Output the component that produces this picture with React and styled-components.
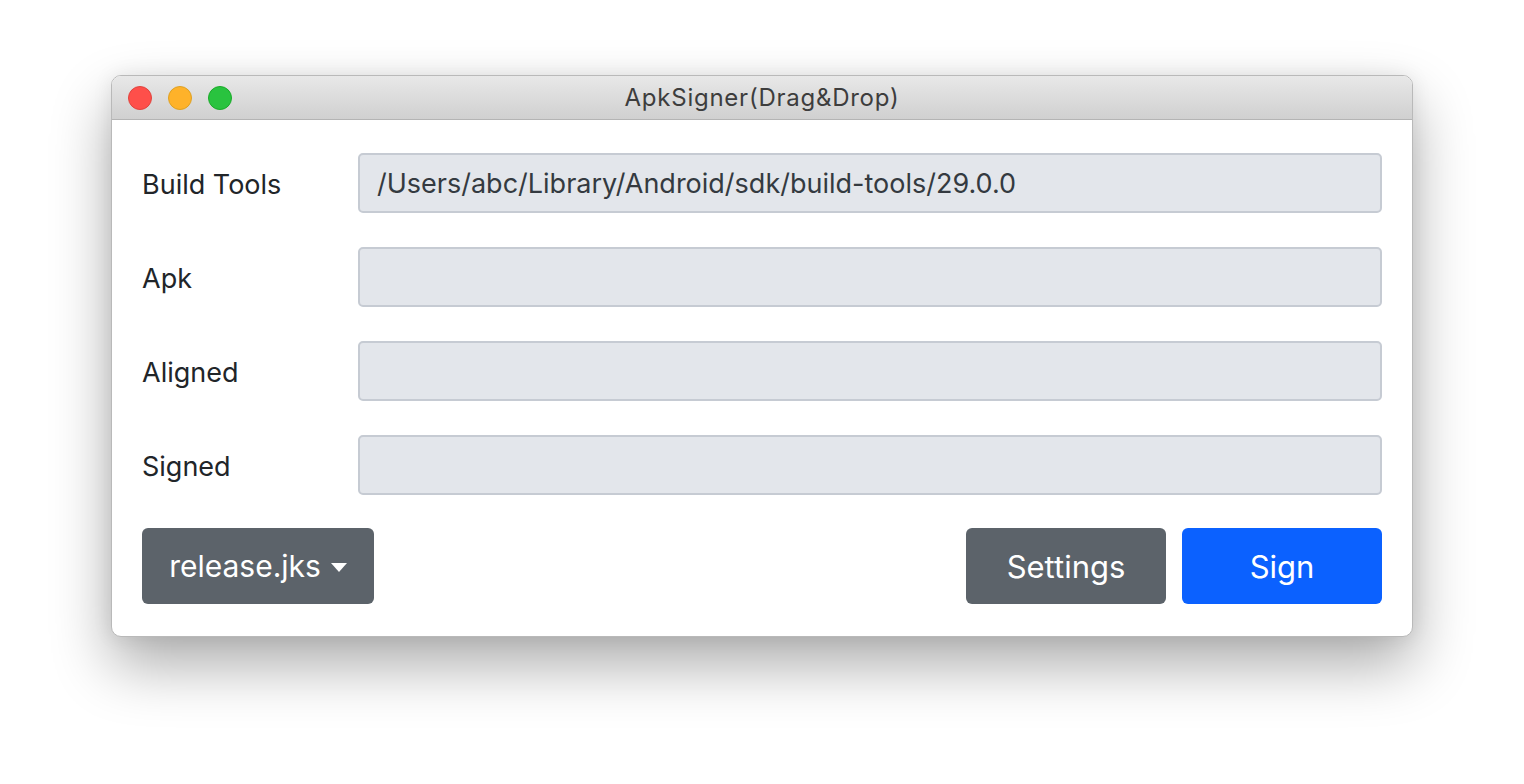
import React from "react";
import styled, { createGlobalStyle } from "styled-components";

const Global = createGlobalStyle`
  html, body { margin: 0; padding: 0; background: #ffffff; }
  body { font-family: Inter, "Open Sans", "Liberation Sans", sans-serif; }
  * { box-sizing: border-box; }
`;

const Page = styled.div`
  width: 1524px;
  height: 784px;
  padding: 75px 0 0 111px;
`;

const Window = styled.div`
  width: 1302px;
  height: 562px;
  border-radius: 10px;
  background: #ffffff;
  border: 1px solid #b9b9b9;
  box-shadow: 0 28px 60px rgba(0, 0, 0, 0.33), 0 0 20px rgba(0, 0, 0, 0.08);
  overflow: hidden;
  display: flex;
  flex-direction: column;
`;

const TitleBar = styled.div`
  height: 44px;
  flex: none;
  background: linear-gradient(#e8e8e8, #d0d0d0);
  border-bottom: 1px solid #b4b4b4;
  display: grid;
  grid-template-columns: 1fr auto 1fr;
  align-items: center;
  padding: 0 16px;
`;

const Lights = styled.div`
  display: flex;
  gap: 16px;
`;

const Light = styled.span`
  width: 24px;
  height: 24px;
  border-radius: 50%;
  background: ${(p) => p.$c};
  border: 1px solid ${(p) => p.$b};
`;

const Title = styled.div`
  font-size: 24px;
  color: #3d3d3d;
  letter-spacing: 0.75px;
`;

const Body = styled.div`
  flex: 1;
  padding: 33px 30px 31px 30px;
  display: flex;
  flex-direction: column;
  gap: 34px;
`;

const Row = styled.div`
  display: grid;
  grid-template-columns: 216px 1fr;
  align-items: center;
`;

const Label = styled.div`
  font-size: 27px;
  color: #212529;
  margin-top: 2px;
`;

const Field = styled.div`
  height: 60px;
  background: #e3e6eb;
  border: 2px solid #c6cbd3;
  border-radius: 5px;
  display: flex;
  align-items: center;
  padding: 0 17px;
  font-size: 27px;
  color: #343a40;
`;

const Actions = styled.div`
  display: flex;
  align-items: center;
  gap: 16px;
  margin-top: -1px;
`;

const Spacer = styled.div`
  flex: 1;
`;

const Button = styled.button`
  height: 76px;
  width: ${(p) => p.$w || "auto"};
  padding: 0 24px;
  border: none;
  border-radius: 6px;
  background: ${(p) => (p.$primary ? "#0b61ff" : "#5c636a")};
  color: #ffffff;
  font-family: inherit;
  font-size: ${(p) => p.$fs || "31px"};
  display: flex;
  align-items: center;
  justify-content: center;
  gap: 10px;
`;

const Caret = styled.span`
  width: 0;
  height: 0;
  border-left: 8px solid transparent;
  border-right: 8px solid transparent;
  border-top: 9px solid #ffffff;
  margin-top: 2px;
`;

const rows = [
  ["Build Tools", "/Users/abc/Library/Android/sdk/build-tools/29.0.0"],
  ["Apk", ""],
  ["Aligned", ""],
  ["Signed", ""],
];

export default function App() {
  return (
    <Page>
      <Global />
      <Window>
        <TitleBar>
          <Lights>
            <Light $c="#fe4f4a" $b="#e0443e" />
            <Light $c="#feb22a" $b="#dea123" />
            <Light $c="#29c33f" $b="#1aab29" />
          </Lights>
          <Title>ApkSigner(Drag&amp;Drop)</Title>
          <div />
        </TitleBar>
        <Body>
          {rows.map(([l, v]) => (
            <Row key={l}>
              <Label>{l}</Label>
              <Field>{v}</Field>
            </Row>
          ))}
          <Actions>
            <Button $w="232px" $fs="30px">
              release.jks <Caret />
            </Button>
            <Spacer />
            <Button $w="200px">Settings</Button>
            <Button $w="200px" $primary>Sign</Button>
          </Actions>
        </Body>
      </Window>
    </Page>
  );
}
